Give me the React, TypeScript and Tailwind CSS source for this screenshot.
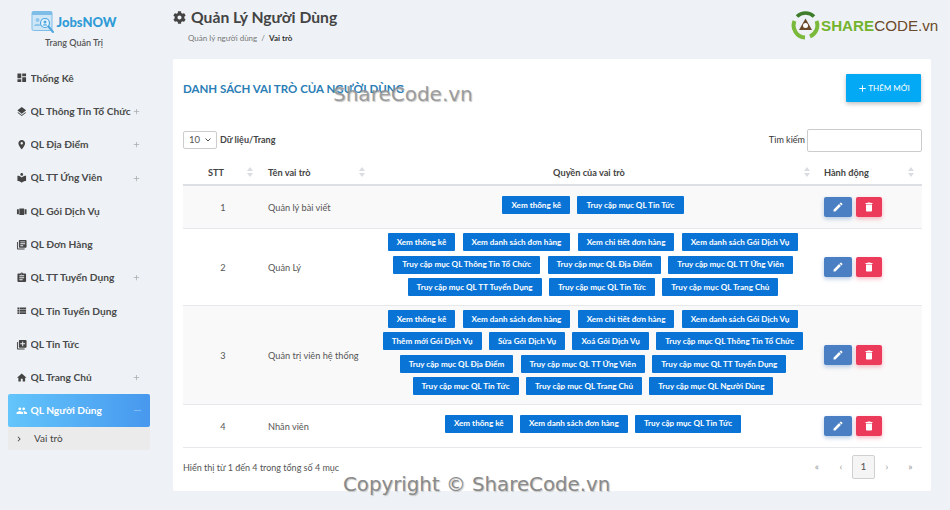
import React from "react";
import { FaCog } from "react-icons/fa";
import {
  MdAdd,
  MdAssignment,
  MdChevronRight,
  MdDashboard,
  MdDelete,
  MdEdit,
  MdHome,
  MdLayers,
  MdLibraryAdd,
  MdLibraryBooks,
  MdLocalLibrary,
  MdLocationOn,
  MdPeople,
  MdViewList,
  MdViewCarousel,
} from "react-icons/md";

const menu = [
  { label: "Thống Kê", icon: MdDashboard },
  { label: "QL Thông Tin Tổ Chức", icon: MdLayers, more: true },
  { label: "QL Địa Điểm", icon: MdLocationOn, more: true },
  { label: "QL TT Ứng Viên", icon: MdLocalLibrary, more: true },
  { label: "QL Gói Dịch Vụ", icon: MdViewCarousel },
  { label: "QL Đơn Hàng", icon: MdLibraryBooks },
  { label: "QL TT Tuyển Dụng", icon: MdAssignment, more: true },
  { label: "QL Tin Tuyển Dụng", icon: MdViewList },
  { label: "QL Tin Tức", icon: MdLibraryAdd },
  { label: "QL Trang Chủ", icon: MdHome, more: true },
];

const roles = [
  {
    id: 1,
    name: "Quản lý bài viết",
    h: "h-[43px]",
    striped: true,
    lines: [["Xem thống kê", "Truy cập mục QL Tin Tức"]],
  },
  {
    id: 2,
    name: "Quản Lý",
    h: "h-[77px]",
    striped: false,
    lines: [
      ["Xem thống kê", "Xem danh sách đơn hàng", "Xem chi tiết đơn hàng", "Xem danh sách Gói Dịch Vụ"],
      ["Truy cập mục QL Thông Tin Tổ Chức", "Truy cập mục QL Địa Điểm", "Truy cập mục QL TT Ứng Viên"],
      ["Truy cập mục QL TT Tuyển Dụng", "Truy cập mục QL Tin Tức", "Truy cập mục QL Trang Chủ"],
    ],
  },
  {
    id: 3,
    name: "Quản trị viên hệ thống",
    h: "h-[99px]",
    striped: true,
    lines: [
      ["Xem thống kê", "Xem danh sách đơn hàng", "Xem chi tiết đơn hàng", "Xem danh sách Gói Dịch Vụ"],
      ["Thêm mới Gói Dịch Vụ", "Sửa Gói Dịch Vụ", "Xoá Gói Dịch Vụ", "Truy cập mục QL Thông Tin Tổ Chức"],
      ["Truy cập mục QL Địa Điểm", "Truy cập mục QL TT Ứng Viên", "Truy cập mục QL TT Tuyển Dụng"],
      ["Truy cập mục QL Tin Tức", "Truy cập mục QL Trang Chủ", "Truy cập mục QL Người Dùng"],
    ],
  },
  {
    id: 4,
    name: "Nhân viên",
    h: "h-[43px]",
    striped: false,
    lines: [["Xem thống kê", "Xem danh sách đơn hàng", "Truy cập mục QL Tin Tức"]],
  },
];

const SortArrows = () => (
  <svg width="6" height="10" viewBox="0 0 6 10" className="fill-[#d9dce0]">
    <path d="M3 0l3 4H0zM3 10L0 6h6z" />
  </svg>
);

const JobsLogo = () => (
  <svg width="24" height="24" viewBox="0 0 24 24">
    <rect x="1" y="1.5" width="20" height="19" rx="1.5" fill="#cfe6f7" stroke="#7dbde8" />
    <rect x="1" y="1.5" width="20" height="3.5" fill="#7dbde8" />
    <circle cx="6.5" cy="10" r="2" fill="#8fc7ec" />
    <path d="M3 16c.5-3 6-3 7 0z" fill="#8fc7ec" />
    <circle cx="14" cy="13" r="4.5" fill="#e6f3fc" stroke="#4ea6e0" strokeWidth="1.2" />
    <circle cx="14" cy="12" r="1.5" fill="#4ea6e0" />
    <path d="M11.5 15.5c.6-1.800 4.400-1.800 5 0z" fill="#4ea6e0" />
    <path d="M17.500 16.500L22 22" stroke="#4ea6e0" strokeWidth="2" strokeLinecap="round" />
  </svg>
);

const ShareLogo = () => (
  <svg width="29" height="29" viewBox="0 0 29 29">
    <path d="M6 5.500A12 12 0 0 1 23 5.500" fill="none" stroke="#3f7d2a" strokeWidth="3.500" />
    <path d="M25.500 10A12 12 0 0 1 19 25.500" fill="none" stroke="#7ab93a" strokeWidth="4" />
    <path d="M3.500 10A12 12 0 0 0 14 26.500" fill="none" stroke="#7ab93a" strokeWidth="4" />
    <path d="M14.500 7.500l6.500 11.500H8z" fill="#6b4a2b" />
    <circle cx="14.500" cy="14.500" r="2.500" fill="#ffffff" />
  </svg>
);

const Sidebar = () => (
  <aside className="flex w-[158px] shrink-0 flex-col">
    <div className="flex h-[61.500px] flex-col items-center pr-[10px] pt-[10px]">
      <div className="flex items-center gap-[1px]">
        <JobsLogo />
        <span className="text-[13px] leading-none font-black text-[#2f9bd6]">JobsNOW</span>
      </div>
      <span className="mt-[3px] text-[9px] leading-[11px] font-semibold text-[#555]">Trang Quản Trị</span>
    </div>
    <nav className="flex flex-col px-[8px]">
      {menu.map(({ label, icon: Icon, more }) => (
        <div key={label} className="flex h-[33.300px] items-center pl-[8px] pr-[9px] text-[#4a4a4a]">
          <Icon className="mr-[3px] h-[11.500px] w-[11.500px] shrink-0 text-[#444]" />
          <span className="flex-1 truncate text-[10.200px] font-bold">{label}</span>
          {more && <MdAdd className="h-[9px] w-[9px] text-[#aaa]" />}
        </div>
      ))}
      <div className="flex h-[33px] items-center rounded-[2px] bg-gradient-to-r from-[#63c5fb] to-[#4798ee] pl-[8px] pr-[9px] text-white">
        <MdPeople className="mr-[3px] h-[11.500px] w-[11.500px] shrink-0" />
        <span className="flex-1 text-[10.200px] font-bold">QL Người Dùng</span>
        <span className="h-px w-[7px] bg-white/30" />
      </div>
      <div className="flex h-[23px] items-center bg-[#ebebeb] pl-[6px] text-[#444]">
        <MdChevronRight className="h-[10px] w-[10px]" />
        <span className="ml-[10px] text-[10px]">Vai trò</span>
      </div>
    </nav>
  </aside>
);

const Permission = ({ label }: { label: string }) => (
  <span className="flex h-[18px] items-center rounded-[1px] bg-[#0a74d6] px-[9px] text-[8.100px] font-bold whitespace-nowrap text-white">
    {label}
  </span>
);

const RoleTable = () => (
  <table className="w-full table-fixed border-collapse text-[9.200px] text-[#555]">
    <thead>
      <tr className="h-[25px] border-b-2 border-[#dcdfe3] text-[#444]">
        <th className="w-[73px] font-bold">
          <div className="flex items-center justify-between pl-[25px] pr-[3px] pt-[1px]">
            <span>STT</span>
            <SortArrows />
          </div>
        </th>
        <th className="w-[114px] font-bold">
          <div className="flex items-center justify-between pl-[12px] pr-[5px] pt-[1px]">
            <span>Tên vai trò</span>
            <SortArrows />
          </div>
        </th>
        <th className="font-bold">
          <div className="flex items-center pl-[4px] pr-[2px] pt-[1px]">
            <span className="flex-1 text-center">Quyền của vai trò</span>
            <SortArrows />
          </div>
        </th>
        <th className="w-[110px] font-bold">
          <div className="flex items-center justify-between pl-[12px] pr-[8px] pt-[1px]">
            <span>Hành động</span>
            <SortArrows />
          </div>
        </th>
      </tr>
    </thead>
    <tbody>
      {roles.map((role) => (
        <tr key={role.id} className={`border-b border-[#e6e8eb] ${role.h} ${role.striped ? "bg-[#f9f9f9]" : "bg-white"}`}>
          <td className="pl-[7px] pt-[3px] text-center">{role.id}</td>
          <td className="pl-[12px] pt-[3px]">{role.name}</td>
          <td>
            <div className="flex flex-col items-center gap-[4.300px] pb-[4px] pl-[4px]">
              {role.lines.map((line, i) => (
                <div key={i} className="flex gap-[7.300px]">
                  {line.map((p) => (
                    <Permission key={p} label={p} />
                  ))}
                </div>
              ))}
            </div>
          </td>
          <td className="pl-[12px]">
            <div className="flex gap-[4px]">
              <span className="flex h-[20px] w-[28px] items-center justify-center rounded-[2px] bg-[#4a7fc4] text-white shadow-[0_2px_4px_rgba(74,127,196,0.4)]">
                <MdEdit className="h-[12px] w-[12px]" />
              </span>
              <span className="flex h-[20px] w-[26px] items-center justify-center rounded-[2px] bg-[#ec3a5a] text-white shadow-[0_2px_4px_rgba(236,58,90,0.35)]">
                <MdDelete className="h-[12px] w-[12px]" />
              </span>
            </div>
          </td>
        </tr>
      ))}
    </tbody>
  </table>
);

const Pager = () => (
  <div className="flex items-center text-[10px] text-[#999]">
    <span className="w-[24px] text-center">«</span>
    <span className="ml-[1px] w-[22px] text-center">‹</span>
    <span className="flex h-[24px] w-[23px] items-center justify-center rounded-[2px] border border-[#d0d0d0] bg-[#f5f5f5] text-[#555]">1</span>
    <span className="w-[24px] text-center">›</span>
    <span className="w-[23px] text-center">»</span>
  </div>
);

export default function App() {
  return (
    <div className="relative flex h-[510px] w-[950px] overflow-hidden bg-[#eef2f6] font-['Lato','Noto_Sans',sans-serif]">
      <Sidebar />
      <main className="flex flex-1 flex-col pl-[15px] pr-[19px]">
        <div className="flex h-[59px] flex-col">
          <div className="flex items-center gap-[5px] pt-[7px] text-[#444]">
            <FaCog className="h-[13px] w-[13px]" />
            <h1 className="text-[15.700px] leading-[20px] font-bold">Quản Lý Người Dùng</h1>
          </div>
          <div className="mt-[6px] pl-[15px] text-[8px] leading-[10px] text-[#777]">
            Quản lý người dùng <span className="mx-[2px]">/</span> <b className="font-bold text-[#333]">Vai trò</b>
          </div>
        </div>

        <section className="h-[432px] rounded-[2px] bg-white pl-[10px] pr-[9px] pt-[15px]">
          <div className="flex h-[52px] items-start justify-between">
            <h2 className="mt-[7px] text-[11.500px] leading-[16px] font-bold text-[#2a7db5]">
              DANH SÁCH VAI TRÒ CỦA NGƯỜI DÙNG
            </h2>
            <button className="mr-[1px] flex h-[28px] w-[75px] items-center justify-center rounded-[1px] bg-[#03a9f4] text-[8px] text-white shadow-[0_2px_4px_rgba(0,0,0,0.25)]">
              <MdAdd className="h-[11px] w-[11px]" />
              THÊM MỚI
            </button>
          </div>

          <div className="flex h-[28px] items-center justify-between">
            <div className="flex items-center gap-[3px] text-[9px] font-bold text-[#444]">
              <span className="flex h-[18px] w-[34px] items-center justify-between rounded-[2px] border border-[#ccc] px-[5px] text-[9.500px] font-normal text-[#555]">
                10
                <svg width="6" height="4" viewBox="0 0 6 4" fill="none" stroke="#555">
                  <path d="M.5.5L3 3 5.500.5" />
                </svg>
              </span>
              Dữ liệu/Trang
            </div>
            <div className="flex items-center gap-[2px] text-[9px] text-[#333]">
              Tìm kiếm
              <span className="h-[23px] w-[115px] rounded-[2px] border border-[#ccc] bg-white" />
            </div>
          </div>

          <div className="mt-[6px]">
            <RoleTable />
          </div>

          <div className="flex h-[38px] items-center justify-between">
            <span className="pt-[2px] text-[9px] text-[#555]">Hiển thị từ 1 đến 4 trong tổng số 4 mục</span>
            <Pager />
          </div>
        </section>
      </main>

      {/* logo and watermarks sit over the page */}
      <div className="absolute left-[791px] top-[11px] flex items-center">
        <ShareLogo />
        <span className="ml-[1px] text-[15.200px] leading-none font-['Liberation_Sans',sans-serif]">
          <b className="text-[#74b32e]">SHARE</b>
          <span className="text-[#6b4a2b]">CODE.vn</span>
        </span>
      </div>
      <div className="pointer-events-none absolute left-[333px] top-[82px] font-['DejaVu_Sans',sans-serif] text-[20px] leading-[24px] text-[#8a8a8a]/80 [text-shadow:1px_1px_1px_#c4c4c4]">
        ShareCode.vn
      </div>
      <div className="pointer-events-none absolute left-[343px] top-[473px] font-['DejaVu_Sans',sans-serif] text-[19.800px] leading-[24px] text-[#8a8a8a] [text-shadow:1px_1px_1px_#c4c4c4]">
        Copyright © ShareCode.vn
      </div>
    </div>
  );
}
